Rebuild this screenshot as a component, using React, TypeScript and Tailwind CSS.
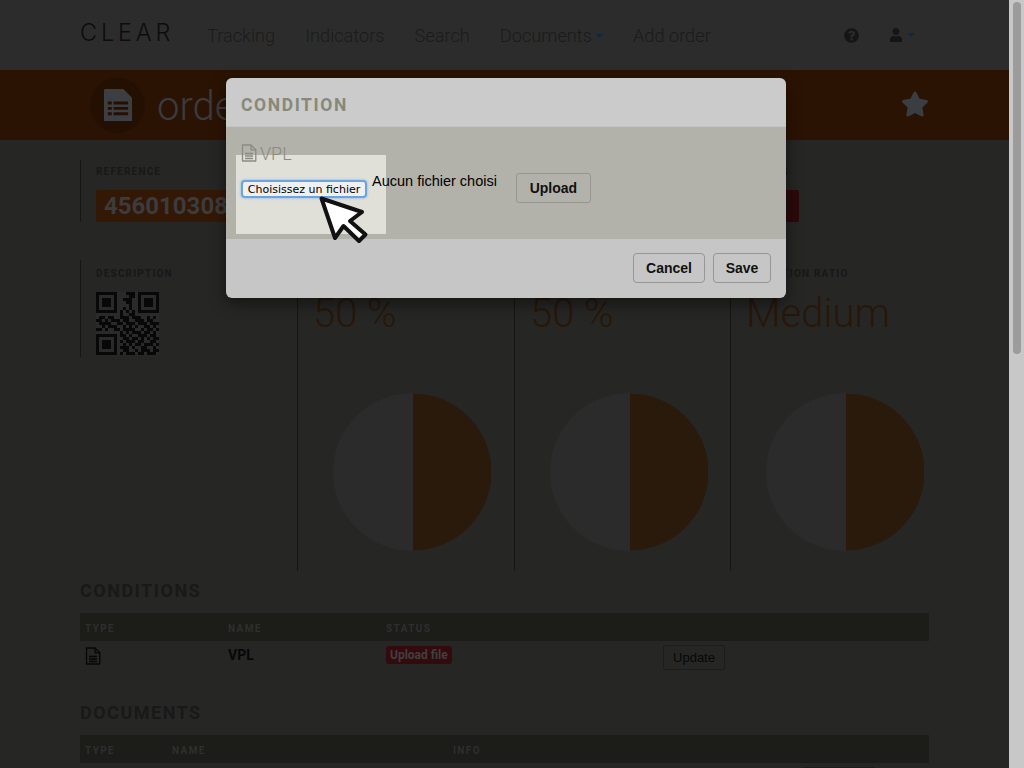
import React from "react";
import { FaQuestionCircle, FaUser, FaStar } from "react-icons/fa";

const QR = [
  "111111100011101111111",
  "100000100001101000001",
  "101110100111001011101",
  "101110100011001011101",
  "101110100001001011101",
  "100000100101001000001",
  "111111101010101111111",
  "000000001001100000000",
  "011011001110111001010",
  "110101110110011101100",
  "011110011011101110111",
  "001011100101010011010",
  "110100110111100101101",
  "000000001010111011010",
  "111111101101001110110",
  "100000100110110101011",
  "101110101011101100110",
  "101110100101011011101",
  "101110101110100110010",
  "100000100110010111011",
  "111111101011101101110",
];

function QrCode() {
  return (
    <svg width="63" height="63" viewBox="0 0 21 21" shapeRendering="crispEdges">
      <rect width="21" height="21" fill="#2a2a2a" />
      {QR.map((row, y) =>
        row.split("").map((c, x) => (c === "1" ? <rect key={`${x}-${y}`} x={x} y={y} width="1" height="1" fill="#080808" /> : null))
      )}
    </svg>
  );
}

function FileOutline({ color }: { color: string }) {
  return (
    <svg width="16" height="18" viewBox="0 0 16 18" fill="none" stroke={color} strokeWidth="1.300" strokeLinejoin="round">
      <path d="M1.500 1H10L14.800 5.800V17H1.500Z" />
      <path d="M10 1V5.800H14.800" />
      <path d="M4 9.500H12M4 12H12M4 14.500H12" />
    </svg>
  );
}

function Pie() {
  return (
    <svg width="158" height="158" viewBox="0 0 158 158" className="block">
      <circle cx="79" cy="79" r="79" fill="#2b2b2b" />
      <path d="M80 0.500 A78.500 78.500 0 0 1 80 157.500 Z" fill="#291a0b" />
    </svg>
  );
}

function Label({ children }: { children: React.ReactNode }) {
  return <div className="text-[10px] leading-[13px] font-bold tracking-[1.2px] text-[#181817]">{children}</div>;
}

function Caret({ color }: { color: string }) {
  return <span className="inline-block w-0 h-0 border-x-[4px] border-x-transparent border-t-[4px]" style={{ borderTopColor: color }} />;
}

function Metric({ label, value, w }: { label: string; value: string; w: string }) {
  return (
    <div className={`${w} h-[311px] border-l border-[#161615] pl-[15px] pt-[7px]`}>
      <Label>{label}</Label>
      <div className="text-[40px] leading-[46px] mt-[11px] font-light text-[#281709]">{value}</div>
      <div className="ml-[20px] mt-[56px]"><Pie /></div>
    </div>
  );
}

function Th({ w, children }: { w: string; children: React.ReactNode }) {
  return <div className={`${w} pt-[3px] text-[10px] font-bold tracking-[1.4px] text-[#2f2f2e]`}>{children}</div>;
}

export default function App() {
  return (
    <div className="relative w-[1024px] h-[768px] overflow-hidden flex bg-[#262625] font-['Roboto',sans-serif]">
      <div className="w-[1009px] h-[768px] overflow-hidden shrink-0">
        <nav className="h-[70px] bg-[#2c2c2c] flex items-center pl-[80px]">
          <div className="w-[127px] -mt-[4px] font-['Inter',sans-serif] font-light text-[23.500px] tracking-[3.800px] text-[#0c0c0c]">CLEAR</div>
          <div className="flex gap-[30px] mt-[1px] text-[18.200px] leading-[24px] font-light text-[#1b1b1b]">
            <span>Tracking</span>
            <span>Indicators</span>
            <span>Search</span>
            <span className="flex items-center gap-[3px]">Documents<Caret color="#0b2a3f" /></span>
            <span>Add order</span>
          </div>
          <div className="ml-[133px] text-[#151515]"><FaQuestionCircle size={15} /></div>
          <div className="ml-[30px] flex items-center gap-[4px] text-[#151515]"><FaUser size={14} /><Caret color="#0b2a3f" /></div>
        </nav>

        <header className="h-[70px] bg-[#2b1303] flex items-center pl-[90px]">
          <div className="w-[55px] h-[55px] rounded-full bg-[#241003] flex items-center justify-center">
            <svg width="28" height="32" viewBox="0 0 29 33">
              <path d="M1 0H20L29 9V33H0V1Z" fill="#3c3e41" />
              <path d="M4 13h4v3H4zM10 13h15v3H10zM4 18.500h4v3H4zM10 18.500h15v3H10zM4 24h4v3H4zM10 24h15v3H10z" fill="#241003" />
            </svg>
          </div>
          <div className="ml-[12px] mt-[4px] text-[40px] font-light text-[#3a3c3f]">order</div>
          <div className="ml-auto mr-[80px] -mt-[2px] text-[#3a3e43]"><FaStar size={28} /></div>
        </header>

        <section className="ml-[80px] w-[849px] mt-[20px] h-[62px] flex">
          <div className="border-l border-[#161615] pl-[15px] pt-[5px]">
            <Label>REFERENCE</Label>
            <div className="mt-[12px] h-[32px] px-[8px] bg-[#341806] rounded-[2px] text-[24px] leading-[32px] font-bold text-[#3a3c3f]">4560103082</div>
          </div>
          <div className="ml-auto mr-[130px] flex flex-col items-end pt-[5px]">
            <div className="mr-[10px]"><Label>STATUS</Label></div>
            <div className="mt-[12px] h-[32px] px-[8px] bg-[#2c090a] rounded-[2px] text-[24px] leading-[32px] font-bold text-[#1e1010]">HOLD</div>
          </div>
        </section>

        <section className="ml-[80px] mt-[38px] h-[310px] flex">
          <div className="w-[217px] h-[97px] border-l border-[#161615] pl-[15px] pt-[7px]">
            <Label>DESCRIPTION</Label>
            <div className="mt-[12px]"><QrCode /></div>
          </div>
          <Metric w="w-[217px]" label="COMPLETION" value="50 %" />
          <Metric w="w-[216px]" label="PROGRESS" value="50 %" />
          <Metric w="w-[199px]" label="DETECTION RATIO" value="Medium" />
        </section>

        <section className="ml-[80px] w-[849px] mt-[10px]">
          <h2 className="text-[18px] leading-[22px] font-bold tracking-[1.500px] text-[#191918]">CONDITIONS</h2>
          <div className="mt-[11px] h-[28px] bg-[#1c1c18] flex items-center pl-[5px]">
            <Th w="w-[143px]">TYPE</Th>
            <Th w="w-[158px]">NAME</Th>
            <Th w="w-[100px]">STATUS</Th>
          </div>
          <div className="h-[49px] flex pl-[5px] pt-[5px]">
            <div className="w-[143px] pt-[1px]"><FileOutline color="#070707" /></div>
            <div className="w-[158px] text-[14px] leading-[18px] font-bold text-[#080808]">VPL</div>
            <div className="w-[277px]">
              <div className="w-fit h-[18px] px-[4px] rounded-[3px] bg-[#330a0d] text-[12px] leading-[18px] font-bold text-[#404040]">Upload file</div>
            </div>
            <div className="w-[62px] h-[25px] -mt-[1px] border border-[#1c1c1b] rounded-[2px] text-[13px] leading-[24px] text-center font-['Liberation_Sans',sans-serif] text-[#080808]">Update</div>
          </div>
        </section>

        <section className="ml-[80px] w-[849px] mt-[12px]">
          <h2 className="text-[18px] leading-[22px] font-bold tracking-[1.500px] text-[#191918]">DOCUMENTS</h2>
          <div className="mt-[11px] h-[28px] bg-[#1c1c18] flex items-center pl-[5px]">
            <Th w="w-[87px]">TYPE</Th>
            <Th w="w-[281px]">NAME</Th>
            <Th w="w-[100px]">INFO</Th>
          </div>
          <div className="ml-[722px] mt-[4px] w-[73px] h-[10px] border border-[#1c1c1b] rounded-[2px]" />
        </section>
      </div>

      <div className="flex-1 bg-[#c8c8c8] pl-[4px]">
        <div className="w-[8px] h-[352px] mt-[2px] rounded-[4px] bg-[#9c9c9c]" />
      </div>

      <div className="absolute left-[226px] top-[78px] w-[560px] h-[220px] rounded-[6px] overflow-hidden flex flex-col shadow-[0_5px_15px_rgba(0,0,0,0.5)]">
        <div className="h-[49px] bg-[#cbcbcb] pl-[15px] pt-[5px] flex items-center border-b border-[#c4c4c0]">
          <div className="text-[17.500px] leading-[22px] font-bold tracking-[1.600px] text-[#88887a]">CONDITION</div>
        </div>
        <div className="relative h-[112px] bg-[#b2b2aa] pl-[15px] pt-[16px]">
          <div className="absolute left-[10px] top-[28px] w-[150px] h-[79px] bg-[#e0e0d8]" />
          <div className="relative flex items-center gap-[3px] text-[#8a8a82] h-[20px]">
            <FileOutline color="#8a8a82" />
            <span className="text-[18px] font-light">VPL</span>
          </div>
          <div className="relative flex items-start mt-[17px]">
            <div className="w-[126px] h-[18px] bg-[#f0f0f0] rounded-[4px] border-2 border-[#6aa4e2] shadow-[0_0_3px_#7fb4ec] text-[11px] leading-[15px] text-center font-['DejaVu_Sans',sans-serif] text-black">Choisissez un fichier</div>
            <div className="ml-[5px] -mt-[8px] text-[14.500px] leading-[18px] font-['Liberation_Sans',sans-serif] text-black whitespace-nowrap">Aucun fichier choisi</div>
            <div className="ml-[19px] -mt-[7px] w-[75px] h-[30px] border border-[#969690] rounded-[3px] text-[14px] leading-[28px] text-center font-bold font-['Liberation_Sans',sans-serif] text-[#111]">Upload</div>
          </div>
        </div>
        <div className="h-[59px] bg-[#c6c6c6] flex items-start justify-end gap-[8px] pt-[14px] pr-[15px] font-['Liberation_Sans',sans-serif]">
          <div className="w-[72px] h-[30px] border border-[#969696] rounded-[4px] text-[14px] leading-[28px] text-center font-bold text-[#111]">Cancel</div>
          <div className="w-[58px] h-[30px] border border-[#969696] rounded-[4px] text-[14px] leading-[28px] text-center font-bold text-[#111]">Save</div>
        </div>
      </div>

      <svg className="absolute left-[315px] top-[192px]" width="60" height="56" viewBox="0 0 60 56">
        <path d="M6.500 6.500L47 20L35 29L50.500 42.500L44 49L28.500 34L20 46Z" fill="#fff" stroke="#111" strokeWidth="4" strokeLinejoin="round" />
      </svg>
    </div>
  );
}
